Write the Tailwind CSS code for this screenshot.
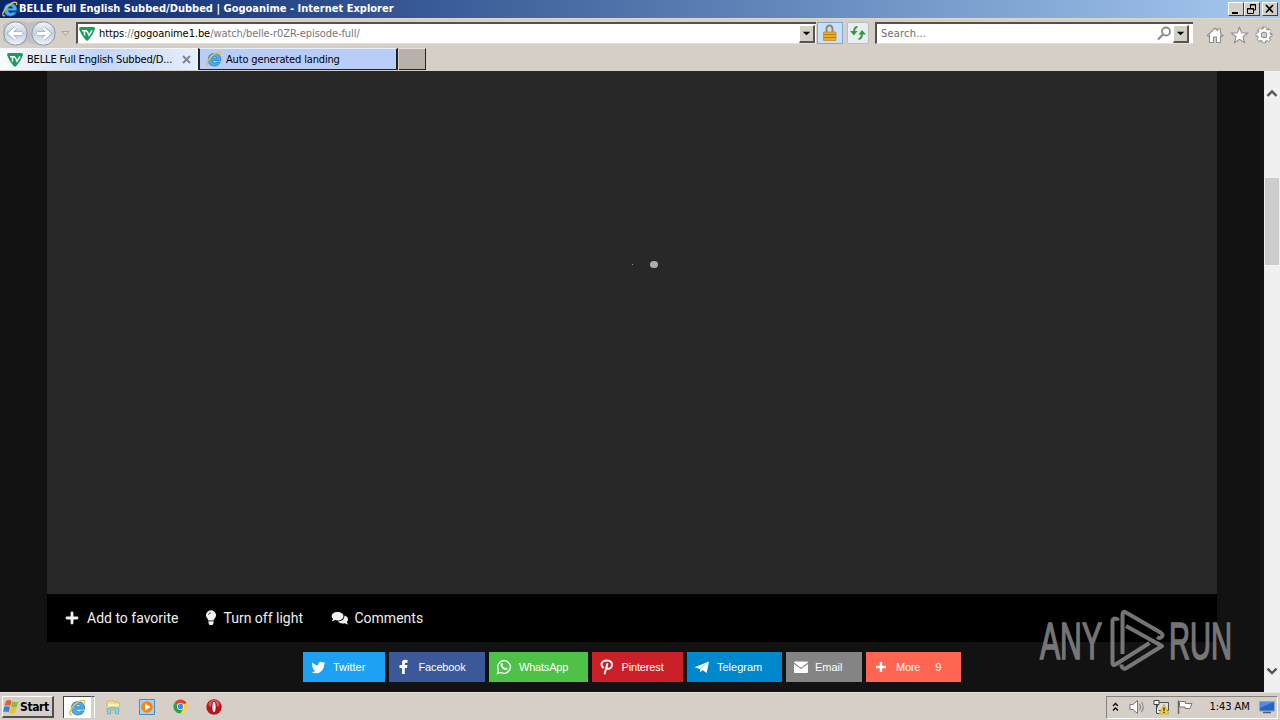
<!DOCTYPE html>
<html lang="en">
<head>
<meta charset="utf-8">
<title>BELLE Full English Subbed/Dubbed | Gogoanime</title>
<script src="https://cdn.jsdelivr.net/npm/@tailwindcss/browser@4"></script>
</head>
<body class="w-[1280px] h-[720px] overflow-hidden bg-[#121212] flex flex-col font-['DejaVu_Sans_Condensed','DejaVu_Sans',sans-serif] text-[11px] text-black">
<svg class="hidden">
  <symbol id="ie" viewBox="0 0 16 16">
    <path d="M14.300 11.200Q12.500 15 8.500 15 2.300 15 2.300 8.700T8.500 2.400Q15 2.400 14.800 9.600H6.200Q6.500 12 8.700 12q1.500 0 2.200-.8zM6.300 7.200h4.600Q10.500 5.200 8.600 5.200T6.300 7.200Z" fill="#49aeea" stroke="#1c76c0" stroke-width=".7" fill-rule="evenodd"/>
    <path d="M3 14.700C-1 15.700.8 9.700 5.500 5.200S15.800-.5 14.600 4.200" fill="none" stroke="#efc040" stroke-width="1.300"/>
  </symbol>
  <symbol id="tv" viewBox="0 0 16 14">
    <path d="M1.500 0h13q2 .5 1.300 2.500Q13.500 9 9.300 13q-1.300 1.500-2.600 0Q2.500 9 .2 2.500-.3.5 1.500 0Z" fill="#14a05a"/>
    <path d="M3 3.700h5M5.500 3.700v4.800M8 4l2 4.300L13 3.500" fill="none" stroke="#fff" stroke-width="1.500"/>
  </symbol>
</svg>

<header class="h-[18px] shrink-0 flex items-center bg-gradient-to-r from-[#0a246a] to-[#a6caf0] pl-[2px] pr-[2px]">
  <svg class="w-4 h-4 shrink-0"><use href="#ie"/></svg>
  <span class="text-white font-bold whitespace-nowrap ml-px pt-px tracking-[0.01px]">BELLE Full English Subbed/Dubbed | Gogoanime - Internet Explorer</span>
  <div class="ml-auto flex">
    <svg class="w-4 h-[14px] bg-[#d4d0c8] border border-t-white border-l-white border-r-[#404040] border-b-[#404040]" viewBox="0 0 14 12"><path d="M3 9h6v2H3z"/></svg>
    <svg class="w-4 h-[14px] bg-[#d4d0c8] border border-t-white border-l-white border-r-[#404040] border-b-[#404040]" viewBox="0 0 14 12"><path d="M5.500 5V1.500h5V7H8.500M5 2h6M2.500 5.500h6v5h-6zM2 6h7" fill="none" stroke="#000"/></svg>
    <svg class="ml-[2px] w-4 h-[14px] bg-[#d4d0c8] border border-t-white border-l-white border-r-[#404040] border-b-[#404040]" viewBox="0 0 14 12"><path d="M3 2l7 7.500M10 2L3 9.500" stroke="#000" stroke-width="1.700"/></svg>
  </div>
</header>

<nav class="h-[30px] shrink-0 bg-[#d5cfc8] border-t border-[#d9d7c9] flex items-start">
  <svg class="w-[76px] h-[29px] shrink-0" viewBox="0 0 76 29">
    <defs>
      <linearGradient id="round" x2="0" y2="1"><stop stop-color="#f4f6f9"/><stop offset=".5" stop-color="#c3d0e0"/><stop offset="1" stop-color="#eef4fa"/></linearGradient>
    </defs>
    <path d="M3 6Q15-2 29 4 43-2 55 8v12q-13 10-27 3Q15 30 3 22Z" fill="#c3c1c0"/>
    <circle cx="15.500" cy="14.500" r="11.700" fill="url(#round)" stroke="#8d99a8"/>
    <circle cx="43.500" cy="14.500" r="11.700" fill="url(#round)" stroke="#8d99a8"/>
    <path d="M22 14.500H10M15.500 9l-5.800 5.500 5.800 5.500M37 14.500h12M43.500 9l5.800 5.500-5.800 5.500" fill="none" stroke="#93a3b9" stroke-width="4"/>
    <path d="M22 14.500H10M15.500 9l-5.800 5.500 5.800 5.500M37 14.500h12M43.500 9l5.800 5.500-5.800 5.500" fill="none" stroke="#fff" stroke-width="2.800"/>
    <path d="M62 12.500h7l-3.500 4z" fill="#ddd8d2" stroke="#aaa49e"/>
  </svg>
  <div class="mt-[3px] h-[22px] w-[740px] shrink-0 bg-white border-t-2 border-l-2 border-b border-t-[#55524e] border-l-[#55524e] border-b-[#e4e0da] flex items-center">
    <svg class="w-4 h-[14px] ml-[1px] shrink-0"><use href="#tv"/></svg>
    <span class="ml-[4px] pt-[2px] text-[#777] whitespace-nowrap tracking-[-0.080px]"><span class="text-black">https</span>://<span class="text-black">gogoanime1.be</span>/watch/belle-r0ZR-episode-full/</span>
    <svg class="ml-auto mr-[1px] w-4 h-[18px] shrink-0 bg-[#d4d0c8] border border-t-white border-l-white border-r-2 border-b-2 border-r-[#555] border-b-[#555]" viewBox="0 0 14 16"><path d="M3 6h8l-4 4z"/></svg>
  </div>
  <svg class="ml-[1px] mt-[3px] w-[26px] h-[22px] shrink-0 bg-[#c9e0fa] border border-[#78a8e0]" viewBox="0 0 24 20"><path d="M8.500 9V6q0-3.500 3-3.500T14.500 6v3" fill="none" stroke="#9b8865" stroke-width="2"/><path d="M5.500 9H18v8.500H5.500z" fill="#e8ad26" stroke="#c48512" stroke-width=".7"/><path d="M5.500 11.500H18M5.500 14.500H18" stroke="#b97d14"/></svg>
  <svg class="ml-[4px] mt-[3px] w-[22px] h-[22px] shrink-0 bg-[#e9edf0] border border-[#b9bdc0] rounded-[2px]" viewBox="0 0 20 20"><path d="M9.500 4Q6 3.500 6 10M10.500 16q3.500 0 3.500-6.500" fill="none" stroke="#2f9c3c" stroke-width="2"/><path d="M2 8h7.500L6 12.500zM10.500 11.500H18L14 7z" fill="#2f9c3c"/></svg>
  <div class="ml-[6px] mt-[3px] h-[22px] w-[318px] shrink-0 bg-white border-t-2 border-l-2 border-b border-t-[#55524e] border-l-[#55524e] border-b-[#e4e0da] flex items-center">
    <span class="ml-[4px] pt-[2px] text-[#6d6d6d] tracking-[0.200px]">Search...</span>
    <svg class="ml-auto w-[15px] h-[15px]" viewBox="0 0 15 15"><circle cx="9" cy="5.500" r="4" fill="none" stroke="#898989" stroke-width="1.800"/><path d="M6 8.500l-5 5" stroke="#898989" stroke-width="2.200"/></svg>
    <svg class="ml-[1px] mr-[4px] w-4 h-[18px] shrink-0 bg-[#d4d0c8] border border-t-white border-l-white border-r-2 border-b-2 border-r-[#555] border-b-[#555]" viewBox="0 0 14 16"><path d="M3 6h8l-4 4z"/></svg>
  </div>
  <svg class="ml-auto mt-[7px] w-[74px] h-[20px] shrink-0" viewBox="0 0 74 20">
    <g fill="#fff" stroke="#8e8e8e" stroke-width="1.100">
      <path d="M1.500 9.500L9 2l2.500 2.500V3h3v4.500l2.500 2-1.500 1-1-.8V16.500h-4V11H7.500v5.500h-4V9.700l-1 .8z"/>
      <path d="M33.500 1.500l2.200 5.200 5.800.4-4.500 3.700 1.500 5.700-5-3.200-5 3.200L30 10.800l-4.500-3.700 5.800-.4z"/>
    </g>
    <g fill="none">
      <circle cx="58" cy="9" r="6.600" stroke="#8e8e8e" stroke-width="3.600" stroke-dasharray="3.600 1.584" stroke-dashoffset="1.800"/>
      <circle cx="58" cy="9" r="4.600" stroke="#8e8e8e" stroke-width="4.600"/>
      <circle cx="58" cy="9" r="6.200" stroke="#fff" stroke-width="2.800" stroke-dasharray="2.100 2.770" stroke-dashoffset="1.050"/>
      <circle cx="58" cy="9" r="4.600" stroke="#fff" stroke-width="2.800"/>
    </g>
  </svg>
</nav>

<div class="h-[23px] shrink-0 bg-[#d5cfc8] flex items-stretch pb-px">
  <div class="w-[198px] bg-gradient-to-r from-[#fbfcff] via-[#c0d5fb] to-[#e5eeff] flex items-center pl-[7px] border-t border-[#f5f5f5]">
    <svg class="w-4 h-[14px] shrink-0"><use href="#tv"/></svg>
    <span class="ml-[4px] pt-[2px] whitespace-nowrap tracking-[-0.170px]">BELLE Full English Subbed/D...</span>
    <svg class="ml-auto mr-[7px] w-[9px] h-[9px] shrink-0" viewBox="0 0 9 9"><path d="M1 1l7 7M8 1L1 8" stroke="#85868d" stroke-width="2"/></svg>
  </div>
  <div class="w-[200px] bg-[#b9cdf9] border-l-2 border-r-2 border-b border-t border-t-[#e8efff] border-l-[#222] border-r-[#222] border-b-[#222] flex items-center pl-[6px]">
    <svg class="w-4 h-4 shrink-0"><use href="#ie"/></svg>
    <span class="ml-[4px] pt-[2px] whitespace-nowrap tracking-[-0.150px]">Auto generated landing</span>
  </div>
  <div class="ml-px w-[27px] bg-[#b8b1aa] border-t border-t-[#e5e2dd] border-r border-b border-r-[#222] border-b-[#222]"></div>
</div>

<main class="h-[621px] shrink-0 flex">
  <div class="w-[1264px] pl-[47px] pr-[47px] bg-[#121212] relative">
    <div class="h-[523px] bg-[#282828] relative">
      <i class="absolute left-[603px] top-[190px] w-[8px] h-[7px] rounded-full bg-[#adadad]"></i>
      <i class="absolute left-[585px] top-[193px] w-px h-px bg-[#999]"></i>
    </div>
    <div class="h-12 bg-black text-[#efefef] font-[Roboto,sans-serif] text-[14px] flex items-center pl-[18px] whitespace-nowrap">
      <svg class="w-[14px] h-[14px]" viewBox="0 0 14 14"><path d="M7 2v10M2 7h10" stroke="#f2f2f2" stroke-width="2.800" stroke-linecap="round"/></svg>
      <span class="ml-[8px] w-[92px]">Add to favorite</span>
      <svg class="ml-[25.500px] w-[12px] h-[16px]" viewBox="0 0 12 16"><path d="M3.300 10.500Q3 9 1.800 7.800A4.900 4.900 0 1 1 10.200 7.800Q9 9 8.700 10.500zM3.500 11.300h5v2L7.500 15h-3l-1-1.700z" fill="#f2f2f2"/><path d="M3.500 5Q3.700 3 6 2.800" fill="none" stroke="#333" stroke-width=".8"/></svg>
      <span class="ml-[7px] w-[80px]">Turn off light</span>
      <svg class="ml-[27px] w-[18px] h-[14px]" viewBox="0 0 18 14"><path d="M6.500 1C10 1 12.500 2.800 12.500 5.200S10 9.500 6.500 9.500q-1.300 0-2.500-.4Q2.500 10.200.5 10.200 1.700 9 2 7.800.7 6.700.7 5.200C.7 2.800 3 1 6.500 1ZM13.500 4.600q3.500 1 3.500 4 0 1.500-1.200 2.500.3 1.200 1.600 2.300-2.200 0-3.600-1.100-4.600 1-7-1.800 6.700 0 6.700-5.900Z" fill="#f2f2f2"/></svg>
      <span class="ml-[6px]">Comments</span>
    </div>
    <div class="mt-[10px] h-[30px] ml-[256px] flex gap-[4px] text-white font-['Liberation_Sans',Arial,sans-serif] text-[11px] whitespace-nowrap">
      <div class="w-[82px] bg-[#1da1f2] flex items-center"><svg class="ml-[8px] w-[15px] h-[15px]" viewBox="0 0 24 24"><path fill="#fff" d="M23 5c-.8.400-1.700.6-2.600.7.900-.6 1.600-1.400 2-2.500-.9.500-1.900.9-2.900 1.100A4.600 4.600 0 0 0 11.600 8.500C7.900 8.300 4.500 6.500 2.200 3.800c-1.200 2-.6 4.700 1.400 6.100-.7 0-1.400-.2-2.100-.6 0 2.200 1.500 4.200 3.700 4.600-.7.200-1.400.2-2.100.1.600 1.900 2.300 3.200 4.300 3.200A9.300 9.300 0 0 1 .700 19.100a13 13 0 0 0 20-11.600C21.600 6.900 22.400 6 23 5z"/></svg><span class="ml-[7px]">Twitter</span></div>
      <div class="w-[96px] bg-[#3b5998] flex items-center"><svg class="ml-[7px] w-4 h-4" viewBox="0 0 16 16"><path fill="#fff" d="M6 15V9H3.500V6H6V4Q6 .8 9.200.8q1.500 0 2.300.2v2.700H10q-1.200 0-1.200 1.200V6h2.600L11 9H8.800v6z"/></svg><span class="ml-[6.500px] tracking-[-0.150px]">Facebook</span></div>
      <div class="w-[99px] bg-[#4dc247] flex items-center"><svg class="ml-[7px] w-4 h-4" viewBox="0 0 16 16"><path d="M1.500 14.500l1-3.500A6.300 6.300 0 1 1 5 13.500z" fill="none" stroke="#fff" stroke-width="1.300"/><path d="M5.200 4.200q.8-.5 1.200.3l.6 1.300-.7 1q1 1.900 2.700 2.500l.9-1 1.800.9q-.2 1.900-2 1.900Q5.800 10.500 4.500 6q0-1.100.7-1.800z" fill="#fff"/></svg><span class="ml-[7px] tracking-[-0.200px]">WhatsApp</span></div>
      <div class="w-[91px] bg-[#cb2027] flex items-center"><svg class="ml-[7px] w-4 h-4" viewBox="0 0 16 16"><path d="M4 8.500C.5 4.500 3.500 1.500 7.800 1.500c4.500 0 6.200 3 4.800 6.200-1.100 2.500-4.300 2.700-4.900.9M8.300 5L5.700 14.500" fill="none" stroke="#fff" stroke-width="1.900" stroke-linecap="round"/></svg><span class="ml-[6.500px] tracking-[-0.150px]">Pinterest</span></div>
      <div class="w-[95px] bg-[#0088cc] flex items-center"><svg class="ml-[7px] w-4 h-4" viewBox="0 0 16 16"><path d="M.6 8.200L15 2.400 12.700 14 8.400 11.100l-2.100 2.300L6 9.900z" fill="#fff"/><path d="M6.200 10l5.300-4.800" stroke="#0088cc" stroke-width=".5"/></svg><span class="ml-[7px]">Telegram</span></div>
      <div class="w-[76px] bg-[#848484] flex items-center"><svg class="ml-[7px] w-4 h-4" viewBox="0 0 16 16"><path d="M1 3.500q0-1 1-1h12q1 0 1 1L8 8.700zM1 5l7 5 7-5v8q0 1-1 1H2q-1 0-1-1z" fill="#fff"/></svg><span class="ml-[6px]">Email</span></div>
      <div class="w-[95px] bg-[#ff6550] flex items-center"><svg class="ml-[7px] w-4 h-4" viewBox="0 0 16 16"><path d="M8 3v10M3 8h10" stroke="#fff" stroke-width="2.400"/></svg><span class="ml-[7px] tracking-[-0.200px]">More</span><span class="ml-[15px]">9</span></div>
    </div>
    <svg class="absolute left-[1030px] top-[524px] w-[220px] h-[94px] overflow-visible" viewBox="1030 595 220 94" opacity=".82">
      <g fill="#8e8e8e" stroke="#8e8e8e" stroke-width="1.700" font-family="Liberation Sans Narrow, Liberation Sans, sans-serif" font-size="51">
        <text x="1040" y="659" textLength="62" lengthAdjust="spacingAndGlyphs">ANY</text>
        <text x="1169" y="659" textLength="63" lengthAdjust="spacingAndGlyphs">RUN</text>
      </g>
      <g fill="none" stroke="#8e8e8e" stroke-width="4" stroke-linejoin="round">
        <path d="M1117.500 620.500v-1q-5-2.500-5 2v41q0 3.500 3 2l34-21.500"/>
        <path d="M1122.500 654v-39q0-4.500 3.500-2.500l34.500 20q4 3 .5 5-2 1-4-.5"/>
        <path d="M1126 626l36 20-35.500 22q-3.500 2-5-2v-1.500"/>
      </g>
    </svg>
  </div>
  <div class="w-4 bg-[#f0f0f0] flex flex-col items-center">
    <svg class="mt-[16px] w-3 h-3" viewBox="0 0 12 12"><path d="M1.500 8.800L6 4.500l4.500 4.300" fill="none" stroke="#555" stroke-width="2.400"/></svg>
    <div class="mt-[79px] w-[14px] h-[87px] bg-[#cdcdcd]"></div>
    <svg class="mt-auto mb-[15px] w-3 h-3" viewBox="0 0 12 12"><path d="M1.500 3.700L6 8l4.500-4.300" fill="none" stroke="#555" stroke-width="2.400"/></svg>
  </div>
</main>

<footer class="h-7 shrink-0 bg-[#d5cfc8] border-t border-[#e5e2dd] flex items-center">
  <div class="ml-[2px] mt-px w-[52px] h-[22px] shrink-0 border border-t-white border-l-white border-r-2 border-b-2 border-r-[#504d4a] border-b-[#504d4a] flex items-center">
    <svg class="w-4 h-4 shrink-0" viewBox="0 0 16 16"><path d="M3 2q3-2 5.500 0L7.300 7.200Q5 5.500 1.500 7z" fill="#e5602d"/><path d="M9.300 2.500q3 1.200 6 0L13.800 8q-3 1.300-5.700-.3z" fill="#8dbc3f"/><path d="M1.200 8Q4 6.500 7 8l-1.300 5.200Q3 11.700.2 13z" fill="#3f7fd0"/><path d="M8 8.500q3 1.300 5.500.3L12 14q-3 1.200-5.500-.3z" fill="#f1bd32"/></svg>
    <span class="ml-px pt-px font-bold text-[12px] tracking-[-0.400px]">Start</span>
  </div>
  <div class="ml-[9px] mt-px w-[28px] h-[22px] shrink-0 bg-white border-t border-l border-t-[#444] border-l-[#444] flex items-center justify-center">
    <svg class="w-[17px] h-[17px]"><use href="#ie"/></svg>
  </div>
  <div class="mt-px w-1 h-[22px] border-t border-t-[#444] border-r border-r-white border-l border-l-[#d5cfc8]"></div>
  <svg class="ml-[10px] w-4 h-4" viewBox="0 0 16 16"><path d="M2 2.500l6-1 1 1.500h5V13H2z" fill="#f5df86" stroke="#ccae58" stroke-width=".7"/><path d="M3 6h11" stroke="#fff4bc" stroke-width="2"/><path d="M2.500 15V9.500q5-2.500 11 0V15h-3v-4h-5v4z" fill="#8fd0ea" stroke="#5aa9cc" stroke-width=".7"/></svg>
  <svg class="ml-[18px] w-4 h-4" viewBox="0 0 16 16"><path d="M.5.5h15v15H.5z" fill="#a9cdeb" stroke="#4b8dcc"/><circle cx="8" cy="8" r="5.800" fill="#f08913"/><path d="M6 4.500l5.500 3.500L6 11.500z" fill="#fff"/></svg>
  <svg class="ml-[18px] w-[15px] h-[15px]" viewBox="0 0 16 16"><circle cx="8" cy="8" r="7.500" fill="#ffd13a"/><path d="M8 8L1.500 4.250A7.500 7.500 0 0 1 14.500 4.250z" fill="#e34133"/><path d="M8 8L1.500 4.250A7.500 7.500 0 0 0 8 15.500l3-5z" fill="#29a352"/><circle cx="8" cy="8" r="3.700" fill="#fff"/><circle cx="8" cy="8" r="2.900" fill="#438bea"/></svg>
  <svg class="ml-[18px] w-[16px] h-[16px]" viewBox="0 0 16 16"><circle cx="8" cy="8" r="7.700" fill="#bd1520"/><ellipse cx="8" cy="5" rx="5.500" ry="4" fill="#dc5557"/><ellipse cx="8" cy="8" rx="2.900" ry="6" fill="#a40d17"/><ellipse cx="8" cy="8" rx="1.600" ry="5.200" fill="#fff"/></svg>
  <div class="ml-auto mr-[2px] w-[172px] h-[23px] mt-px border border-t-[#85817c] border-l-[#85817c] border-r-white border-b-white flex items-center">
    <svg class="ml-[5px] w-[7px] h-[10px]" viewBox="0 0 7 10"><path d="M1 4l2.500-2.500L6 4M1 8.500L3.500 6 6 8.500" fill="none" stroke="#000" stroke-width="1.300"/></svg>
    <svg class="ml-[10px] w-[17px] h-4" viewBox="0 0 17 16"><path d="M1 5.500h3L8.500 1.500v13L4 10.500H1z" fill="#fff" stroke="#777"/><path d="M10.500 5q2 3 0 6M12.500 3q3.500 5 0 10" fill="none" stroke="#8a8a8a" stroke-width="1.200"/></svg>
    <svg class="ml-[7px] w-4 h-4" viewBox="0 0 16 16"><path d="M4.500 3.500h11v8h-11z" fill="#ddd" stroke="#555"/><path d="M1 1.500h5v4H1zM3.500 5.500v9h3" fill="#fff" stroke="#444"/><path d="M11 5.500l5 9.500H6z" fill="#f6d326" stroke="#b79a20" stroke-width=".6"/><path d="M11 8.500v3.200M11 12.700v1.300" stroke="#222" stroke-width="1.300"/></svg>
    <svg class="ml-[8px] w-4 h-4" viewBox="0 0 16 16"><path d="M1.500 1.500v13.500" stroke="#666" stroke-width="1.500"/><path d="M2.500 2.500h6v2h6.500l-2 5H8v-1.500H2.500z" fill="#fff" stroke="#777"/></svg>
    <span class="ml-[16.500px] pt-px w-[42px] whitespace-nowrap tracking-[-0.050px]">1:43 AM</span>
    <svg class="ml-auto mr-[2px] w-4 h-[14px]" viewBox="0 0 16 14"><path d="M.5 1.500h15v9.500H.5z" fill="#2865bf" stroke="#80a7d5"/><path d="M1 2h14L1 8z" fill="#518ce0"/><path d="M4 12.500h8" stroke="#4a5c73" stroke-width="1.500"/></svg>
  </div>
</footer>
</body>
</html>
